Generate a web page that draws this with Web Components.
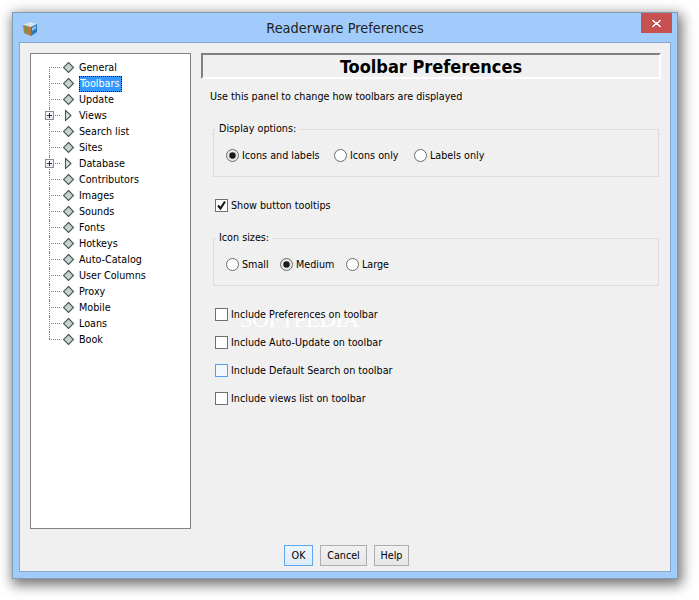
<!DOCTYPE html>
<html>
<head>
<meta charset="utf-8">
<title>Readerware Preferences</title>
<style>
    html, body { margin: 0; background: #fff; }
    body {
        width: 699px;
        height: 600px;
        overflow: hidden;
        font: 10.7px "DejaVu Sans Condensed", "DejaVu Sans", sans-serif;
        color: #000;
    }
</style>
</head>
<body>
<rw-window title-text="Readerware Preferences">
    <rw-tree slot="tree">
        <rw-tree-item first>General</rw-tree-item>
        <rw-tree-item selected>Toolbars</rw-tree-item>
        <rw-tree-item>Update</rw-tree-item>
        <rw-tree-item folder>Views</rw-tree-item>
        <rw-tree-item>Search list</rw-tree-item>
        <rw-tree-item>Sites</rw-tree-item>
        <rw-tree-item folder>Database</rw-tree-item>
        <rw-tree-item>Contributors</rw-tree-item>
        <rw-tree-item>Images</rw-tree-item>
        <rw-tree-item>Sounds</rw-tree-item>
        <rw-tree-item>Fonts</rw-tree-item>
        <rw-tree-item>Hotkeys</rw-tree-item>
        <rw-tree-item>Auto-Catalog</rw-tree-item>
        <rw-tree-item>User Columns</rw-tree-item>
        <rw-tree-item>Proxy</rw-tree-item>
        <rw-tree-item>Mobile</rw-tree-item>
        <rw-tree-item>Loans</rw-tree-item>
        <rw-tree-item last>Book</rw-tree-item>
    </rw-tree>

    <rw-heading slot="panel">Toolbar Preferences</rw-heading>
    <rw-note slot="panel">Use this panel to change how toolbars are displayed</rw-note>

    <rw-group slot="panel" legend="Display options:" style="margin-top:24px">
        <rw-radio checked style="width:108px">Icons and labels</rw-radio>
        <rw-radio style="width:80px">Icons only</rw-radio>
        <rw-radio>Labels only</rw-radio>
    </rw-group>

    <rw-check slot="panel" checked style="margin-top:20px">Show button tooltips</rw-check>

    <rw-group slot="panel" legend="Icon sizes:" style="margin-top:25px">
        <rw-radio style="width:54px">Small</rw-radio>
        <rw-radio checked style="width:66px">Medium</rw-radio>
        <rw-radio>Large</rw-radio>
    </rw-group>

    <rw-check slot="panel" style="margin-top:20px">Include Preferences on toolbar</rw-check>
    <rw-check slot="panel" style="margin-top:12px">Include Auto-Update on toolbar</rw-check>
    <rw-check slot="panel" hover style="margin-top:12px">Include Default Search on toolbar</rw-check>
    <rw-check slot="panel" style="margin-top:12px">Include views list on toolbar</rw-check>

    <rw-button slot="buttons" focused style="width:27px">OK</rw-button>
    <rw-button slot="buttons" style="width:45px">Cancel</rw-button>
    <rw-button slot="buttons" style="width:33px">Help</rw-button>
</rw-window>

<script>
function define(name, css, html, setup) {
    class Element extends HTMLElement {
        constructor() {
            super();
            this.attachShadow({ mode: 'open' });
            this.shadowRoot.innerHTML = `<style>${css}</style>${html}`;
        }

        connectedCallback() {
            if (setup) {
                setup(this, this.shadowRoot);
            }
        }
    }
    if (!customElements.get(name)) {
        customElements.define(name, Element);
    }
}

define('rw-window', `
    :host {
        display: block;
        position: relative;
        width: 666px;
        height: 567px;
        margin: 12px 0 0 12px;
        box-sizing: border-box;
        border: 1px solid #7f9db9;
        background: #a1cbfa;
        box-shadow: 2px 4px 12px 2px rgba(0, 0, 0, .55);
    }
    .title {
        height: 29px;
        display: flex;
        align-items: center;
        justify-content: center;
        position: relative;
        font: 14.4px "DejaVu Sans Condensed", "DejaVu Sans", sans-serif;
        color: #222;
    }
    .logo { position: absolute; left: 9px; top: 7px; }
    .close {
        position: absolute;
        right: 5px;
        top: 0;
        width: 31px;
        height: 20px;
        background: #c75050;
        display: grid;
        place-content: center;
    }
    .close svg { display: block; }
    .client {
        box-sizing: border-box;
        width: 652px;
        height: 530px;
        margin-left: 6px;
        border: 1px solid #8aa8cb;
        background: #f0f0f0;
        padding: 10px;
        display: grid;
        grid-template-columns: 161px 1fr;
        grid-template-rows: 476px 1fr;
        column-gap: 10px;
    }
    .panel { display: flex; flex-direction: column; min-width: 0; }
    .buttons {
        grid-column: 1 / 3;
        display: flex;
        justify-content: center;
        align-items: flex-start;
        gap: 7px;
        padding: 16px 0 0 3px;
    }
    /* sits under the checkbox rows, they have z-index 1 */
    .watermark {
        position: absolute;
        left: 227px;
        top: 295px;
        font: 23px/24px "Liberation Serif", serif;
        letter-spacing: -.6px;
        color: #fff;
        pointer-events: none;
    }
`, `
    <div class="title">
        <svg class="logo" width="17" height="17" viewBox="0 0 17 17">
            <path d="M1 5 L8 2 L15 4 L9 7 Z" fill="#d9e4ea"/>
            <path d="M1 5 L9 7 L9 16 L2 13 Z" fill="#b5794a"/>
            <path d="M3.5 5.8 L5.5 6.3 L5.5 14.5 L3.5 13.6 Z" fill="#6d9a50"/>
            <path d="M9 7 L15 4 L15 12 L9 16 Z" fill="#2b78b8"/>
            <path d="M10 8 L14 5.6 L14 8.5 L10 11 Z" fill="#8cc4ea"/>
        </svg>
        <span id="title"></span>
        <div class="close">
            <svg width="9" height="7" viewBox="0 0 9 7" shape-rendering="crispEdges">
                <path d="M0 0h2v1h1v1h3v-1h1v-1h2v1h-1v1h-1v1h-1v1h1v1h1v1h1v1h-2v-1h-1v-1h-3v1h-1v1h-2v-1h1v-1h1v-1h1v-1h-1v-1h-1v-1h-1z" fill="#fff"/>
            </svg>
        </div>
    </div>
    <div class="client">
        <slot name="tree"></slot>
        <div class="panel"><slot name="panel"></slot></div>
        <div class="buttons"><slot name="buttons"></slot></div>
    </div>
    <div class="watermark">SOFTPEDIA</div>
`, (el, root) => {
    root.getElementById('title').textContent = el.getAttribute('title-text');
});

define('rw-tree', `
    :host {
        display: block;
        box-sizing: border-box;
        height: 476px;
        border: 1px solid #828282;
        background: #fff;
        padding-top: 6px;
    }
`, `<slot></slot>`);

define('rw-tree-item', `
    :host {
        display: flex;
        align-items: center;
        height: 16px;
        position: relative;
        padding-left: 48px;
        color: #000;
    }
    .wire {
        position: absolute;
        left: 18px;
        top: 0;
        bottom: 0;
        width: 0;
        border-left: 1px dotted #808080;
    }
    :host([first]) .wire { top: 7px; }
    :host([last]) .wire { bottom: 9px; }
    .stub {
        position: absolute;
        left: 18px;
        top: 7px;
        width: 11px;
        border-top: 1px dotted #808080;
    }
    .plus {
        position: absolute;
        left: 14px;
        top: 3px;
        width: 9px;
        height: 9px;
        box-sizing: border-box;
        border: 1px solid #8a8a9a;
        background: linear-gradient(#fff, #e2e2ea);
        display: none;
    }
    .plus::before, .plus::after { content: ""; position: absolute; background: #1c2a66; }
    .plus::before { left: 1px; top: 3px; width: 5px; height: 1px; }
    .plus::after { left: 3px; top: 1px; width: 1px; height: 5px; }
    :host([folder]) .plus { display: block; }
    svg { position: absolute; left: 31px; top: 1px; }
    .leaf { display: block; }
    .arrow { display: none; }
    :host([folder]) .leaf { display: none; }
    :host([folder]) .arrow { display: block; }
    .label { padding: 0 1px 0 0; line-height: 14px; height: 14px; border: 1px solid transparent; margin-left: -1px; white-space: nowrap; }
    :host([selected]) .label {
        background: #3399ff;
        color: #fff;
        border: 1px dotted #111;
        margin-left: 0;
        padding-right: 2px;
    }
`, `
    <div class="wire"></div><div class="stub"></div><div class="plus"></div>
    <svg class="leaf" width="13" height="13" viewBox="0 0 13 13">
        <path d="M6.5 1.5 L11.5 6.5 L6.5 11.5 L1.5 6.5 Z" fill="#c3d4d2" stroke="#4a5654" stroke-width="1.1"/>
    </svg>
    <svg class="arrow" width="13" height="13" viewBox="0 0 13 13">
        <path d="M3.5 1.5 L9 6.5 L3.5 11.5 Z" fill="#dfe6e2" stroke="#4a5654" stroke-width="1.1"/>
    </svg>
    <span class="label"><slot></slot></span>
`);

define('rw-heading', `
    :host {
        display: block;
        box-sizing: border-box;
        height: 26px;
        width: 460px;
        border: 2px solid;
        border-color: #808080 #fff #fff #808080;
        text-align: center;
        font: bold 18px/23px "DejaVu Sans Condensed", "DejaVu Sans", sans-serif;
    }
`, `<slot></slot>`);

define('rw-note', `
    :host {
        display: block;
        margin: 10px 0 0 9px;
        line-height: 16px;
    }
`, `<slot></slot>`);

define('rw-group', `
    :host {
        display: block;
        position: relative;
        box-sizing: border-box;
        width: 446px;
        height: 48px;
        margin-left: 12px;
        border: 1px solid #dcdcdc;
    }
    .legend {
        position: absolute;
        left: 2px;
        top: -9px;
        padding: 0 3px;
        background: #f0f0f0;
        line-height: 16px;
        white-space: nowrap;
    }
    .row {
        display: flex;
        align-items: center;
        height: 50px;
        padding-left: 12px;
    }
`, `
    <span class="legend" id="legend"></span>
    <div class="row"><slot></slot></div>
`, (el, root) => {
    root.getElementById('legend').textContent = el.getAttribute('legend');
});

define('rw-radio', `
    :host {
        display: flex;
        align-items: center;
        gap: 3px;
        flex: none;
        white-space: nowrap;
    }
    svg { display: block; flex: none; }
    .dot { display: none; }
    :host([checked]) .dot { display: block; }
    :host([checked]) .ring { fill: #e8e8e8; }
`, `
    <svg width="13" height="13" viewBox="0 0 13 13">
        <circle class="ring" cx="6.5" cy="6.5" r="6" fill="#fff" stroke="#6b6b6b"/>
        <circle class="dot" cx="6.5" cy="6.5" r="3.2" fill="#1a1a1a"/>
    </svg>
    <span><slot></slot></span>
`);

define('rw-check', `
    :host {
        display: flex;
        position: relative;
        z-index: 1;
        align-items: center;
        gap: 3px;
        height: 16px;
        margin-left: 14px;
        white-space: nowrap;
    }
    .box {
        width: 13px;
        height: 13px;
        box-sizing: border-box;
        border: 1px solid #707070;
        background: #fff;
        position: relative;
        flex: none;
    }
    :host([hover]) .box { border-color: #4f9eef; background: #f2f7fe; }
    svg { display: none; position: absolute; left: 0; top: 0; }
    :host([checked]) svg { display: block; }
`, `
    <div class="box">
        <svg width="11" height="11" viewBox="0 0 11 11">
            <path d="M2 5.5 L4.5 8.5 L9 1.5" fill="none" stroke="#111" stroke-width="2"/>
        </svg>
    </div>
    <span><slot></slot></span>
`);

define('rw-button', `
    :host {
        display: block;
        box-sizing: content-box;
        height: 19px;
        border: 1px solid #adadad;
        background: linear-gradient(#f2f2f2, #e6e6e6);
        line-height: 19px;
        text-align: center;
        white-space: nowrap;
    }
    :host([focused]) {
        border-color: #5ea6ee;
        background: linear-gradient(#ecf4fc, #dfecfa);
    }
`, `<slot></slot>`);
</script>
</body>
</html>
